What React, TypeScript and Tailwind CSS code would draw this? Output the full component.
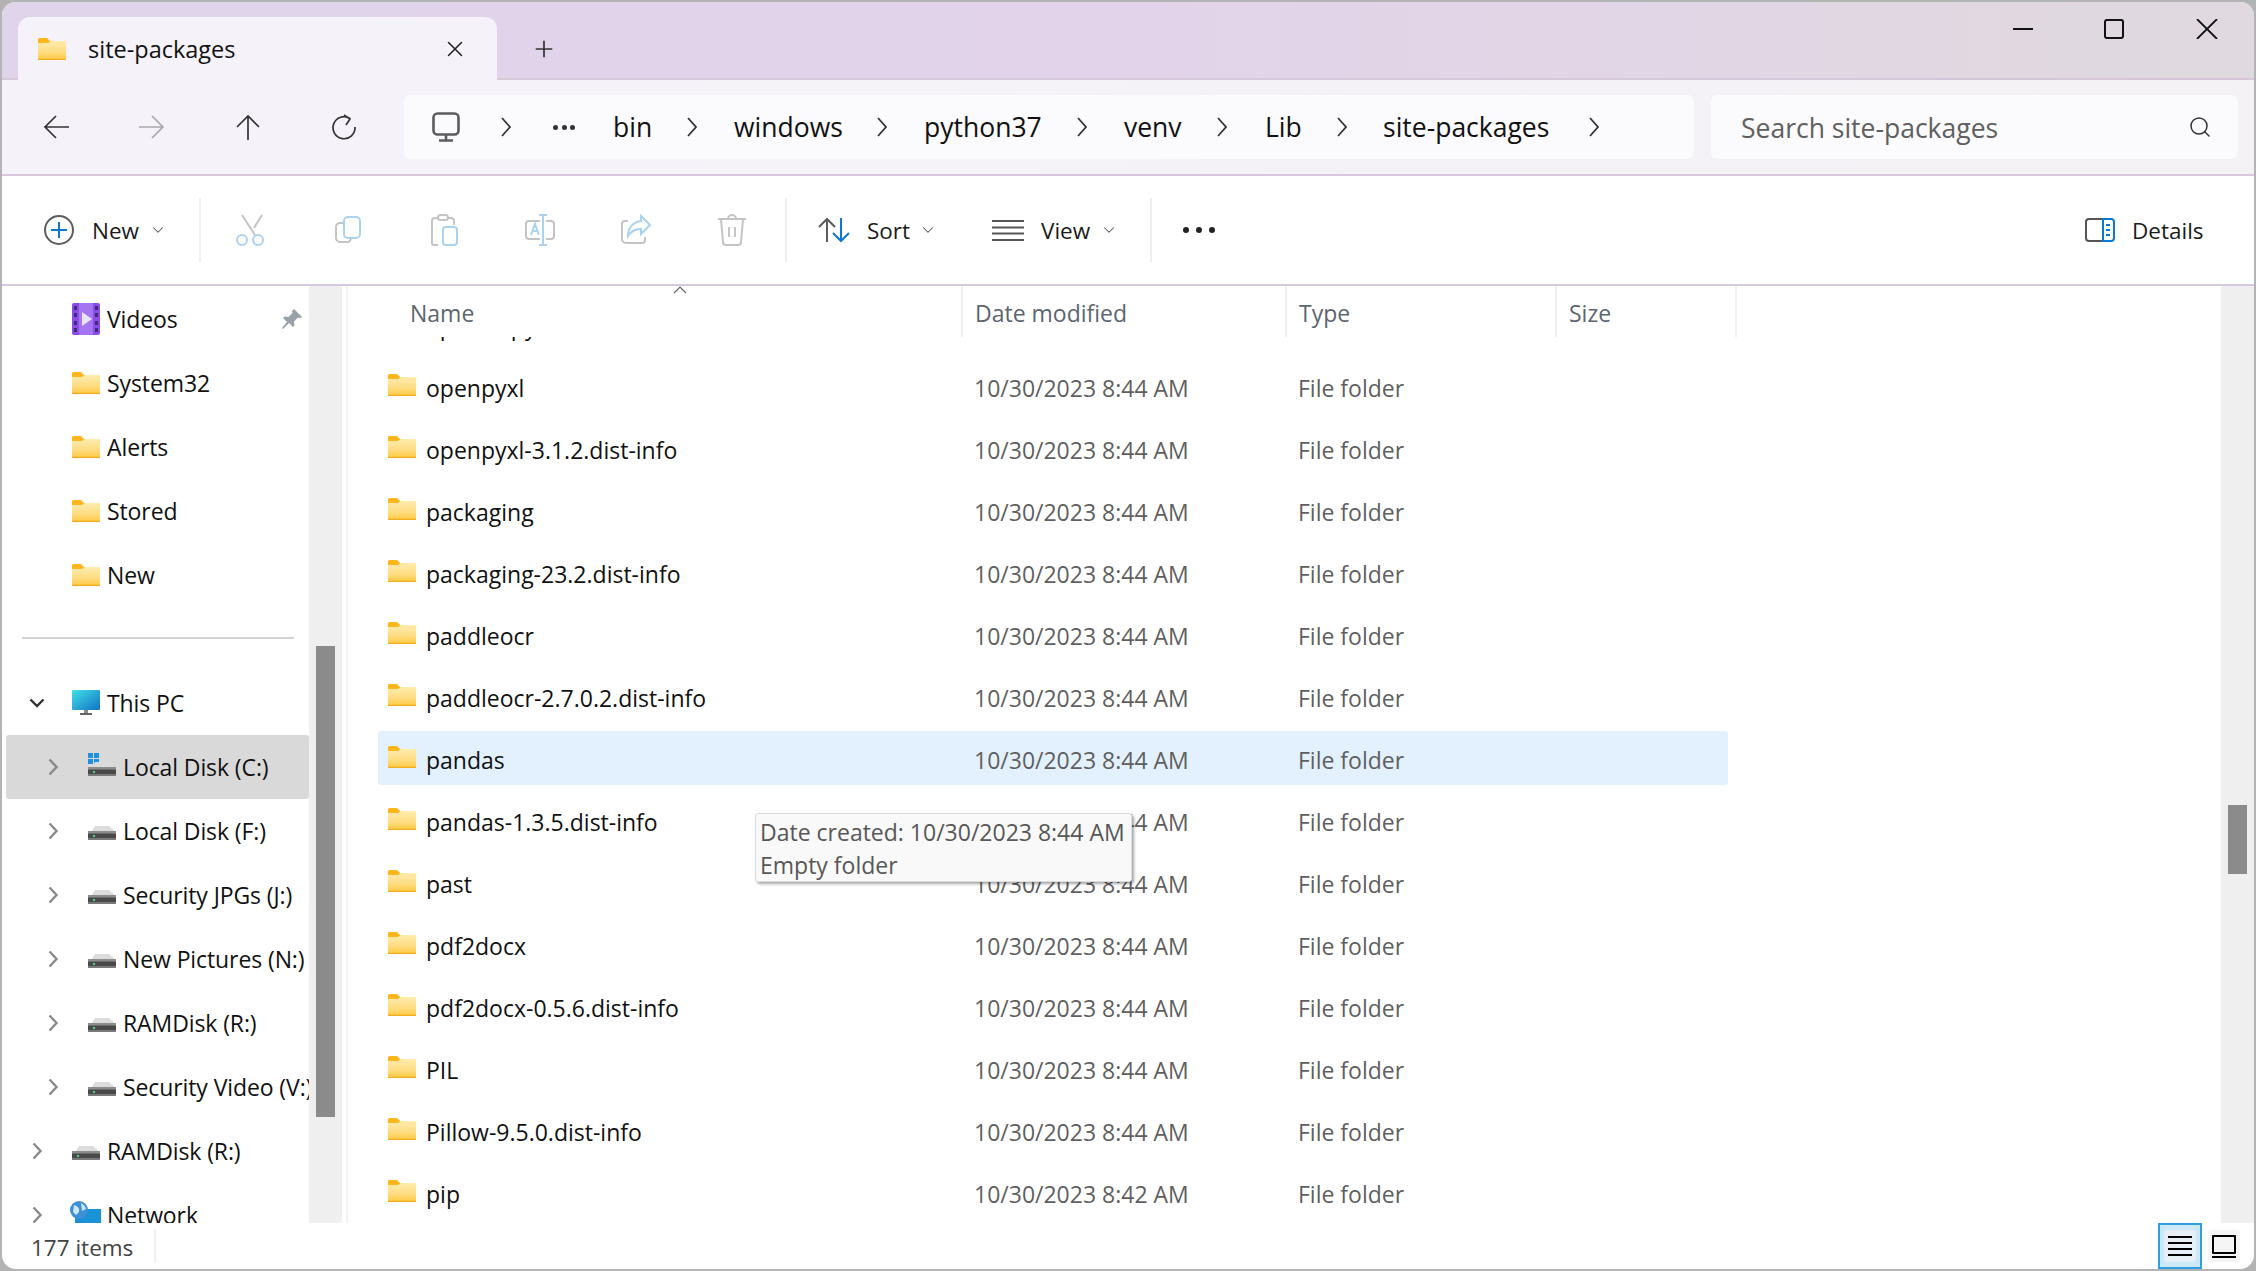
import { ChevronDown, Plus, Search, X } from "lucide-react";

function Folder({ className = "" }: { className?: string }) {
    return (
        <svg viewBox="0 0 28 22" className={"w-[28px] h-[22px] shrink-0 " + className}>
            <defs>
                <linearGradient id="fold" x1="0" y1="0" x2="0" y2="1">
                    <stop offset="0" stopColor="#ffecb0" />
                    <stop offset="0.6" stopColor="#fedc7f" />
                    <stop offset="1" stopColor="#fdc93f" />
                </linearGradient>
            </defs>
            <path d="M0 1.5A1.5 1.5 0 0 1 1.5 0H9l3 3h14.5A1.5 1.5 0 0 1 28 4.5V8H0Z" fill="#fdb71a" />
            <path d="M0 5h10l3-2h13.5A1.5 1.5 0 0 1 28 4.5v16a1.5 1.5 0 0 1-1.5 1.5h-25A1.5 1.5 0 0 1 0 20.5Z" fill="url(#fold)" />
            <rect x="0" y="20.8" width="28" height="1.2" fill="#efac1c" />
        </svg>
    );
}

function Drive({ win = false }: { win?: boolean }) {
    return (
        <svg viewBox="0 0 28 28" className="w-[28px] h-[28px] shrink-0">
            {win && (
                <g fill="#1e90e6">
                    <rect x="0" y="0" width="5" height="5" />
                    <rect x="6" y="0" width="5" height="5" />
                    <rect x="0" y="6" width="5" height="5" />
                    <rect x="6" y="6" width="5" height="5" />
                </g>
            )}
            <path d="M4 14L7 9H21L28 15H0Z" fill="#dcdcdc" />
            <rect x="0" y="14" width="28" height="9" fill="#4a4a4a" />
            <rect x="0" y="14" width="28" height="2.5" fill="#8c8c8c" />
            <rect x="0" y="21" width="28" height="2" fill="#7a7a7a" />
            <rect x="5" y="18" width="2" height="2" fill="#4ade5a" />
        </svg>
    );
}

function Caret({ down = false }: { down?: boolean }) {
    if (down) {
        return (
            <svg viewBox="0 0 16 10" className="w-[16px] h-[10px] shrink-0">
                <path d="M1.5 1.5L8 8l6.5-6.5" fill="none" stroke="#333" strokeWidth="2.4" />
            </svg>
        );
    }
    return (
        <svg viewBox="0 0 10 18" className="w-[10px] h-[18px] shrink-0">
            <path d="M1.5 1.5L8.5 9l-7 7.5" fill="none" stroke="#8a8a8a" strokeWidth="2.4" />
        </svg>
    );
}

const topRows = ["System32", "Alerts", "Stored", "New"];
const driveRows = ["Local Disk (F:)", "Security JPGs (J:)", "New Pictures (N:)", "RAMDisk (R:)", "Security Video (V:)"];

function Sidebar() {
    return (
        <div className="w-[340px] shrink-0 flex overflow-hidden tracking-[-0.1px]">
            <div className="w-[307px] shrink-0 pt-px text-[#111]">
                <div className="h-[64px] flex items-center pl-[70px]">
                    <svg viewBox="0 0 28 32" className="w-[28px] h-[32px] shrink-0">
                        <rect width="28" height="32" rx="2" fill="#8a4be8" />
                        <path d="M7 0h14v32H7Z" fill="#a574f0" />
                        <g fill="#3f2a78">
                            <rect x="2" y="3" width="3" height="4" />
                            <rect x="2" y="10" width="3" height="4" />
                            <rect x="2" y="18" width="3" height="4" />
                            <rect x="2" y="25" width="3" height="4" />
                            <rect x="23" y="3" width="3" height="4" />
                            <rect x="23" y="10" width="3" height="4" />
                            <rect x="23" y="18" width="3" height="4" />
                            <rect x="23" y="25" width="3" height="4" />
                        </g>
                        <path d="M10 9l10 7-10 7Z" fill="#e8e2fb" />
                    </svg>
                    <span className="ml-[7px] w-[150px]">Videos</span>
                    <svg viewBox="0 0 22 22" className="w-[22px] h-[22px] ml-[24px]">
                        <path d="M13 1l8 8-2 1-2-.5-4 4 .5 4-1.5 1.5-4-4L2 21l-1-1 5-6-4-4 1.5-1.5 4 .5 4-4L11 3Z" fill="#97a1a8" />
                    </svg>
                </div>
                {topRows.map((name) => (
                    <div key={name} className="h-[64px] flex items-center pl-[70px]">
                        <Folder />
                        <span className="ml-[7px]">{name}</span>
                    </div>
                ))}
                <div className="ml-[20px] mr-[15px] mt-[30px] mb-[32px] h-[2px] bg-[#d4d4d4]"></div>
                <div className="h-[64px] flex items-center pl-[27px]">
                    <Caret down />
                    <svg viewBox="0 0 28 26" className="ml-[27px] w-[28px] h-[26px] shrink-0">
                        <defs>
                            <linearGradient id="pc" x1="0" y1="0" x2="1" y2="1">
                                <stop offset="0" stopColor="#3fe0e8" />
                                <stop offset="1" stopColor="#1273c4" />
                            </linearGradient>
                        </defs>
                        <rect width="28" height="20" rx="1" fill="url(#pc)" />
                        <rect x="12" y="20" width="4" height="3" fill="#8a8a8a" />
                        <rect x="8" y="23" width="12" height="2" fill="#666" />
                    </svg>
                    <span className="ml-[7px]">This PC</span>
                </div>
                <div className="h-[64px] ml-[4px] flex items-center pl-[42px] bg-[#d9d9d9] rounded-[3px]">
                    <Caret />
                    <div className="ml-[30px]"><Drive win /></div>
                    <span className="ml-[7px] whitespace-nowrap">Local Disk (C:)</span>
                </div>
                {driveRows.map((name) => (
                    <div key={name} className="h-[64px] ml-[4px] flex items-center pl-[42px] overflow-hidden">
                        <Caret />
                        <div className="ml-[30px]"><Drive /></div>
                        <span className="ml-[7px] whitespace-nowrap">{name}</span>
                    </div>
                ))}
                <div className="h-[64px] flex items-center pl-[30px]">
                    <Caret />
                    <div className="ml-[30px]"><Drive /></div>
                    <span className="ml-[7px]">RAMDisk (R:)</span>
                </div>
                <div className="h-[64px] flex items-center pl-[30px]">
                    <Caret />
                    <svg viewBox="0 0 32 28" className="ml-[28px] w-[32px] h-[28px] shrink-0">
                        <rect x="5" y="8" width="26" height="20" fill="#1a93d6" />
                        <circle cx="9" cy="9" r="9" fill="#3d8fd6" />
                        <path d="M4 4q4 1 5 4t-3 6l-3-3Z M11 2q4 2 5 6l-4 2Z" fill="#cfe6f7" />
                    </svg>
                    <span className="ml-[5px]">Network</span>
                </div>
            </div>
            <div className="w-[33px] shrink-0 bg-[#efefef] pl-[7px]">
                <div className="w-[19px] h-[471px] mt-[360px] bg-[#8b8b8b]"></div>
            </div>
        </div>
    );
}

const files = [
    ["opencv-python", "10/30/2023 8:44 AM"],
    ["openpyxl", "10/30/2023 8:44 AM"],
    ["openpyxl-3.1.2.dist-info", "10/30/2023 8:44 AM"],
    ["packaging", "10/30/2023 8:44 AM"],
    ["packaging-23.2.dist-info", "10/30/2023 8:44 AM"],
    ["paddleocr", "10/30/2023 8:44 AM"],
    ["paddleocr-2.7.0.2.dist-info", "10/30/2023 8:44 AM"],
    ["pandas", "10/30/2023 8:44 AM"],
    ["pandas-1.3.5.dist-info", "10/30/2023 8:44 AM"],
    ["past", "10/30/2023 8:44 AM"],
    ["pdf2docx", "10/30/2023 8:44 AM"],
    ["pdf2docx-0.5.6.dist-info", "10/30/2023 8:44 AM"],
    ["PIL", "10/30/2023 8:44 AM"],
    ["Pillow-9.5.0.dist-info", "10/30/2023 8:44 AM"],
    ["pip", "10/30/2023 8:42 AM"],
];

function FileList() {
    return (
        <div className="flex-1 relative flex border-l-2 border-[#f3f3f3] ml-[4px] min-w-0">
            <div className="flex-1 flex flex-col min-w-0">
                <div className="h-[51px] shrink-0 flex text-[#5c6570] relative">
                    <div className="w-[615px] pl-[62px] pt-[10px] border-r-2 border-[#efefef]">Name</div>
                    <div className="w-[324px] pl-[12px] pt-[10px] border-r-2 border-[#efefef]">Date modified</div>
                    <div className="w-[270px] pl-[12px] pt-[10px] border-r-2 border-[#efefef]">Type</div>
                    <div className="w-[180px] pl-[12px] pt-[10px] border-r-2 border-[#efefef]">Size</div>
                    <svg viewBox="0 0 14 8" className="absolute left-[325px] top-0 w-[14px] h-[8px]">
                        <path d="M1 7l6-6 6 6" fill="none" stroke="#666" strokeWidth="1.2" />
                    </svg>
                </div>
                <div className="flex-1 overflow-hidden pl-[30px]">
                    <div className="-mt-[40px] flex flex-col gap-[8px]">
                        {files.map(([name, date]) => (
                            <div key={name} className={"w-[1350px] h-[54px] shrink-0 flex items-center rounded-[3px] " + (name === "pandas" ? "bg-[#e2f1fd]" : "")}>
                                <div className="w-[596px] pl-[10px] flex items-center">
                                    <Folder className="-mt-[2px]" />
                                    <span className="ml-[10px] text-[#111] pt-[5px]">{name}</span>
                                </div>
                                <div className="w-[324px] text-[#5f5f5f] pt-[5px]">{date}</div>
                                <div className="text-[#5f5f5f] pt-[5px]">File folder</div>
                            </div>
                        ))}
                    </div>
                </div>
            </div>
            <div className="w-[33px] shrink-0 bg-[#efefef] pl-[7px]">
                <div className="w-[19px] h-[69px] mt-[519px] bg-[#8b8b8b]"></div>
            </div>
            {/* hover tooltip */}
            <div className="absolute left-[407px] top-[527px] w-[377px] h-[69px] bg-[#f9f9f9] border border-[#dcdcdc] rounded-[3px] shadow-[2px_2px_3px_rgba(0,0,0,0.35)] text-[#575757] pl-[4px] pt-[2px] leading-[33px] text-[23px]">
                <div className="whitespace-nowrap">Date created: 10/30/2023 8:44 AM</div>
                <div>Empty folder</div>
            </div>
        </div>
    );
}

function Crumb({ children, w, ml }: { children: string; w: string; ml: string }) {
    return <span className={"whitespace-nowrap pt-[1px] " + w + " " + ml}>{children}</span>;
}

function Chev({ ml }: { ml: string }) {
    return (
        <svg viewBox="0 0 12 20" className={"w-[12px] h-[20px] shrink-0 " + ml}>
            <path d="M2 1l8 9-8 9" fill="none" stroke="#333" strokeWidth="1.8" />
        </svg>
    );
}

function ToolIcon({ children }: { children: React.ReactNode }) {
    return (
        <div className="w-[96px] flex justify-center">
            <svg viewBox="0 0 32 32" className="w-[32px] h-[32px]" fill="none" strokeWidth="2">
                {children}
            </svg>
        </div>
    );
}

export default function App() {
    return (
        <div className="w-[2256px] h-[1271px] bg-[#b3b3b3] p-[2px] overflow-hidden">
            <div className="w-full h-full rounded-[14px] overflow-hidden flex flex-col bg-white font-['Open_Sans',sans-serif] text-[23px]">
                {/* title bar */}
                <div className="h-[78px] shrink-0 bg-gradient-to-r from-[#dfd4ea] via-[#e2d3ea] to-[#e0d9df] border-b-2 border-[#d5c8db] flex items-end pl-[16px] relative">
                    <div className="w-[479px] h-[63px] bg-[#f5f2fa] rounded-t-[12px] -mb-[2px] flex items-center pl-[20px] shrink-0">
                        <Folder />
                        <span className="ml-[22px] pt-[2px] text-[#111] text-[23.5px]">site-packages</span>
                        <X size={26} strokeWidth={1.4} className="ml-auto mr-[29px] text-[#222]" />
                    </div>
                    <Plus size={26} strokeWidth={1.6} className="ml-[34px] mb-[16px] text-[#333]" />
                    <div className="ml-auto flex items-center self-start mt-[17px] text-[#111]">
                        <svg viewBox="0 0 20 20" className="w-[20px] h-[20px]"><path d="M0 10h20" stroke="#111" strokeWidth="2" /></svg>
                        <svg viewBox="0 0 20 20" className="ml-[71px] w-[20px] h-[20px]"><rect x="1" y="1" width="18" height="18" rx="2" fill="none" stroke="#111" strokeWidth="2" /></svg>
                        <svg viewBox="0 0 22 20" className="ml-[72px] mr-[36px] w-[22px] h-[20px]"><path d="M1 0l20 20M21 0L1 20" fill="none" stroke="#111" strokeWidth="1.8" /></svg>
                    </div>
                </div>
                {/* nav row */}
                <div className="h-[96px] shrink-0 bg-gradient-to-r from-[#f6f2fa] to-[#f4f2f5] border-b-2 border-[#d6c9dd] flex items-center pl-[6px]">
                    <div className="w-[96px] flex justify-center">
                        <svg viewBox="0 0 26 24" className="w-[26px] h-[24px]"><path d="M2 12h24M13 1L2 12l11 11" fill="none" stroke="#333" strokeWidth="1.7" /></svg>
                    </div>
                    <div className="w-[96px] flex justify-center">
                        <svg viewBox="0 0 26 24" className="w-[26px] h-[24px]"><path d="M0 12h24M13 1l11 11-11 11" fill="none" stroke="#a8a8a8" strokeWidth="1.7" /></svg>
                    </div>
                    <div className="w-[96px] flex justify-center">
                        <svg viewBox="0 0 24 26" className="w-[24px] h-[26px]"><path d="M12 26V2M1 13L12 2l11 11" fill="none" stroke="#333" strokeWidth="1.7" /></svg>
                    </div>
                    <div className="w-[96px] flex justify-center">
                        <svg viewBox="0 0 26 26" className="w-[26px] h-[26px]"><path d="M19 4.5A11 11 0 1 0 24 13M13 1l6 4-4 6" fill="none" stroke="#333" strokeWidth="1.7" /></svg>
                    </div>
                    <div className="ml-[12px] w-[1290px] h-[64px] bg-[#fbfafd] rounded-[6px] flex items-center pl-[28px] text-[#111] text-[26.5px]">
                        <svg viewBox="0 0 28 30" className="w-[28px] h-[30px] shrink-0">
                            <rect x="1.5" y="1.5" width="25" height="21" rx="4" fill="none" stroke="#5c5c5c" strokeWidth="2.6" />
                            <path d="M14 23v5M7 28.5h14" stroke="#5c5c5c" strokeWidth="2.6" />
                        </svg>
                        <Chev ml="ml-[40px]" />
                        <span className="ml-[41px] w-[22px] flex justify-between shrink-0">
                            <i className="size-[5px] rounded-full bg-[#333]"></i>
                            <i className="size-[5px] rounded-full bg-[#333]"></i>
                            <i className="size-[5px] rounded-full bg-[#333]"></i>
                        </span>
                        <Crumb w="w-[38px]" ml="ml-[38px]">bin</Crumb>
                        <Chev ml="ml-[35px]" />
                        <Crumb w="w-[108px]" ml="ml-[36px]">windows</Crumb>
                        <Chev ml="ml-[34px]" />
                        <Crumb w="w-[117px]" ml="ml-[36px]">python37</Crumb>
                        <Chev ml="ml-[35px]" />
                        <Crumb w="w-[58px]" ml="ml-[36px]">venv</Crumb>
                        <Chev ml="ml-[34px]" />
                        <Crumb w="w-[34px]" ml="ml-[37px]">Lib</Crumb>
                        <Chev ml="ml-[37px]" />
                        <Crumb w="w-[168px]" ml="ml-[35px]">site-packages</Crumb>
                        <Chev ml="ml-[37px]" />
                    </div>
                    <div className="ml-[17px] w-[527px] h-[64px] bg-[#fbfafc] rounded-[6px] flex items-center pl-[30px] pr-[26px] justify-between text-[#5f5f5f] text-[26.5px]">
                        <span className="pt-[3px]">Search site-packages</span>
                        <Search size={24} strokeWidth={1.5} className="text-[#333]" />
                    </div>
                </div>
                {/* toolbar */}
                <div className="h-[110px] shrink-0 bg-white border-b-2 border-[#d6c9dd] flex items-center pl-[42px] pr-[50px] text-[#1b1b1b] text-[22.5px]">
                    <svg viewBox="0 0 30 30" className="w-[30px] h-[30px] shrink-0">
                        <circle cx="15" cy="15" r="14" fill="none" stroke="#5c5c5c" strokeWidth="2" />
                        <path d="M15 7v16M7 15h16" stroke="#0a78d4" strokeWidth="2" />
                    </svg>
                    <span className="ml-[18px] w-[47px] pt-[2px]">New</span>
                    <ChevronDown size={18} strokeWidth={1.4} className="ml-[10px] text-[#555]" />
                    <div className="ml-[32px] w-[2px] h-[64px] bg-[#efefef]"></div>
                    <div className="ml-[3px] flex">
                        <ToolIcon>
                            <path d="M6 1l13 20M26 1l-8 13" stroke="#c4c4c4" />
                            <circle cx="6" cy="26" r="5" stroke="#a9d2f3" />
                            <circle cx="22" cy="26" r="5" stroke="#a9d2f3" />
                        </ToolIcon>
                        <ToolIcon>
                            <path d="M11 9H8a4 4 0 0 0-4 4v11a4 4 0 0 0 4 4h8a4 4 0 0 0 3-3" stroke="#c4c4c4" />
                            <rect x="12" y="3" width="16" height="21" rx="4" stroke="#a9d2f3" />
                        </ToolIcon>
                        <ToolIcon>
                            <path d="M10 4H7a3 3 0 0 0-3 3v22a2 2 0 0 0 2 2h4M20 4h3a3 3 0 0 1 3 3v4" stroke="#c4c4c4" />
                            <rect x="10" y="1" width="10" height="5" rx="2.5" stroke="#c4c4c4" />
                            <rect x="15" y="13" width="14" height="18" rx="3" stroke="#a9d2f3" />
                        </ToolIcon>
                        <ToolIcon>
                            <path d="M16 7H5a3 3 0 0 0-3 3v12a3 3 0 0 0 3 3h11M22 7h5a3 3 0 0 1 3 3v12a3 3 0 0 1-3 3h-5" stroke="#c4c4c4" />
                            <path d="M19 1v30M15 1h8M15 31h8M7 21l4-11 4 11M8.5 17h5" stroke="#a9d2f3" />
                        </ToolIcon>
                        <ToolIcon>
                            <path d="M8 7H5a3 3 0 0 0-3 3v15a4 4 0 0 0 4 4h16a3 3 0 0 0 3-3v-3" stroke="#c4c4c4" />
                            <path d="M21 2l9 9-9 9v-5c-6 0-10 2-13 7 0-8 5-14 13-15Z" stroke="#a9d2f3" />
                        </ToolIcon>
                        <ToolIcon>
                            <path d="M2 5h28M5 5l2 23a3 3 0 0 0 3 3h12a3 3 0 0 0 3-3l2-23M12 5a4 4 0 0 1 8 0M13 13v10M19 13v10" stroke="#c4c4c4" />
                        </ToolIcon>
                    </div>
                    <div className="ml-[5px] w-[2px] h-[64px] bg-[#efefef]"></div>
                    <svg viewBox="0 0 32 26" className="ml-[31px] w-[32px] h-[26px] shrink-0">
                        <path d="M9 25V2M1 10l8-8 8 8" fill="none" stroke="#5c5c5c" strokeWidth="2" />
                        <path d="M23 1v23M15 16l8 8 8-8" fill="none" stroke="#0a78d4" strokeWidth="2" />
                    </svg>
                    <span className="ml-[17px] w-[42px] pt-[2px]">Sort</span>
                    <ChevronDown size={18} strokeWidth={1.4} className="ml-[10px] text-[#555]" />
                    <svg viewBox="0 0 32 22" className="ml-[55px] w-[32px] h-[22px] shrink-0">
                        <path d="M0 2h32M0 8.5h32M0 14.5h32M0 21h32" stroke="#555" strokeWidth="2" />
                    </svg>
                    <span className="ml-[17px] w-[49px] pt-[2px]">View</span>
                    <ChevronDown size={18} strokeWidth={1.4} className="ml-[10px] text-[#555]" />
                    <div className="ml-[32px] w-[2px] h-[64px] bg-[#efefef]"></div>
                    <span className="ml-[31px] w-[32px] flex justify-between">
                        <i className="size-[6px] rounded-full bg-[#222]"></i>
                        <i className="size-[6px] rounded-full bg-[#222]"></i>
                        <i className="size-[6px] rounded-full bg-[#222]"></i>
                    </span>
                    <svg viewBox="0 0 30 24" className="ml-auto w-[30px] h-[24px] shrink-0">
                        <path d="M18 1H4a3 3 0 0 0-3 3v16a3 3 0 0 0 3 3h14" fill="none" stroke="#555" strokeWidth="2" />
                        <path d="M18 1h8a3 3 0 0 1 3 3v16a3 3 0 0 1-3 3h-8Z" fill="none" stroke="#0a78d4" strokeWidth="2" />
                        <path d="M21 7h4M21 12h4M21 17h4" stroke="#0a78d4" strokeWidth="2" />
                    </svg>
                    <span className="ml-[17px] w-[72px] pt-[2px] whitespace-nowrap">Details</span>
                </div>
                {/* body */}
                <div className="flex-1 flex min-h-0">
                    <Sidebar />
                    <FileList />
                </div>
                {/* status bar */}
                <div className="h-[46px] shrink-0 flex items-center pl-[29px] text-[#444] text-[22.5px]">
                    <span className="pt-[3px]">177 items</span>
                    <div className="ml-[21px] w-[2px] h-[34px] bg-[#f0f0f0]"></div>
                    <div className="ml-auto h-full w-[44px] bg-[#cde8f6] border-2 border-[#2ea0e0] flex items-center justify-center">
                        <div className="size-[32px] bg-[#e6eff5] rounded-[3px] flex flex-col justify-center gap-[4px] px-[4px]">
                            <i className="h-[2px] bg-black"></i>
                            <i className="h-[2px] bg-black"></i>
                            <i className="h-[2px] bg-black"></i>
                            <i className="h-[2px] bg-black"></i>
                        </div>
                    </div>
                    <div className="ml-[6px] mr-[14px] size-[32px] bg-[#f5f5f5] rounded-[3px] flex flex-col justify-center px-[4px]">
                        <i className="h-[19px] border-2 border-black rounded-[1px]"></i>
                        <i className="h-[2px] mt-[2px] bg-black"></i>
                    </div>
                </div>
            </div>
        </div>
    );
}
